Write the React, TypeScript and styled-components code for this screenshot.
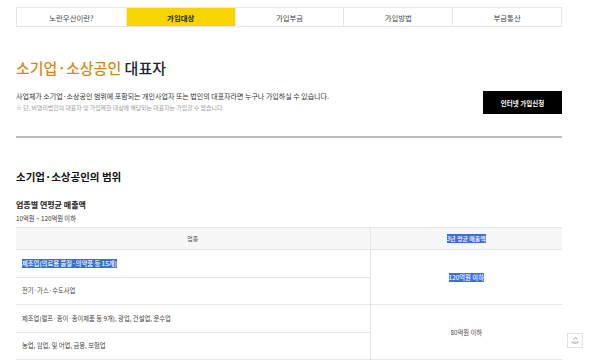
import React from "react";
import styled, { createGlobalStyle } from "styled-components";

const Global = createGlobalStyle`
  html, body { margin: 0; padding: 0; background: #fff; }
  body {
    font-family: "Noto Sans CJK KR", "Noto Sans", sans-serif;
    color: #222;
    overflow: hidden;
  }
  * { box-sizing: border-box; }
`;

const Page = styled.div`
  width: 600px;
  height: 360px;
  padding: 7px 38px 0 16px;
  display: flex;
  flex-direction: column;
`;

const Tabs = styled.nav`
  display: grid;
  grid-template-columns: repeat(5, 1fr);
  height: 23px;
  border: 1px solid #e6e6e6;
`;

const Tab = styled.div<{ $active?: boolean }>`
  display: flex;
  align-items: center;
  justify-content: center;
  font-size: 7.4px;
  font-weight: ${(p) => (p.$active ? 700 : 400)};
  color: ${(p) => (p.$active ? "#222" : "#444")};
  background: ${(p) => (p.$active ? "#f8d500" : "#fff")};
  border-left: 1px solid #e6e6e6;
  &:first-child { border-left: none; }
`;

const Title = styled.h1`
  margin: 31px 0 0;
  font-size: 15px;
  line-height: 20px;
  font-weight: 500;
  color: #1f2430;
`;

const Accent = styled.span`
  color: #d68a1c;
`;

const IntroRow = styled.div`
  margin-top: 13px;
  display: flex;
  align-items: center;
  justify-content: space-between;
`;

const IntroText = styled.div`
  display: flex;
  flex-direction: column;
  gap: 3px;
  margin-top: -2px;
`;

const Lead = styled.p`
  margin: 0;
  font-size: 7px;
  line-height: 9px;
  color: #333;
`;

const Note = styled.p`
  margin: 0;
  font-size: 5.9px;
  line-height: 8px;
  color: #9a9a9a;
`;

const ApplyButton = styled.button`
  width: 79px;
  height: 23px;
  border: none;
  background: #000;
  color: #fff;
  font-family: inherit;
  font-size: 6.5px;
  font-weight: 700;
  padding: 0;
`;

const Divider = styled.hr`
  margin: 22px 0 0;
  border: none;
  height: 2px;
  background: #bdbdbd;
`;

const SectionTitle = styled.h2`
  margin: 31px 0 0;
  font-size: 10.5px;
  line-height: 16px;
  font-weight: 700;
  color: #111;
`;

const SubTitle = styled.h3`
  margin: 14px 0 0;
  font-size: 8px;
  line-height: 12px;
  font-weight: 700;
  color: #222;
`;

const Range = styled.p`
  margin: 3px 0 0;
  font-size: 6.3px;
  line-height: 10px;
  color: #333;
`;

const Table = styled.table`
  margin-top: 3px;
  width: 546px;
  border-collapse: collapse;
  table-layout: fixed;
  border-top: 1px solid #e6e6e6;
`;

const Th = styled.th<{ $w?: number }>`
  height: 22px;
  background: #f7f7f7;
  font-size: 6px;
  font-weight: 400;
  color: #555;
  text-align: center;
  border-bottom: 1px solid #e6e6e6;
  border-left: 1px solid #e6e6e6;
  &:first-child { border-left: none; }
  ${(p) => (p.$w ? `width: ${p.$w}px;` : "")}
`;

const Td = styled.td<{ $center?: boolean }>`
  height: 27.5px;
  font-size: 6.3px;
  color: #444;
  padding: 0 0 0 6px;
  text-align: ${(p) => (p.$center ? "center" : "left")};
  vertical-align: middle;
  border-bottom: 1px solid #e6e6e6;
  border-left: ${(p) => (p.$center ? "1px solid #e6e6e6" : "none")};
  ${(p) => (p.$center ? "padding: 0;" : "")}
`;

const Selected = styled.span`
  background: #3a6fd6;
  color: #fff;
  font-weight: 500;
`;

const TopButton = styled.button`
  position: fixed;
  left: 567px;
  top: 333px;
  width: 16px;
  height: 15px;
  padding: 0;
  border: 1px solid #e2e2e2;
  background: #fff;
  display: flex;
  flex-direction: column;
  align-items: center;
  justify-content: center;
  gap: 1px;
  font-family: "DejaVu Sans", sans-serif;
  font-size: 3.5px;
  color: #666;
`;

export default function App() {
  const tabs = ["노란우산이란?", "가입대상", "가입부금", "가입방법", "부금통산"];
  return (
    <>
      <Global />
      <Page>
        <Tabs>
          {tabs.map((t, i) => (
            <Tab key={t} $active={i === 1}>
              {t}
            </Tab>
          ))}
        </Tabs>
        <Title>
          <Accent>소기업·소상공인</Accent> 대표자
        </Title>
        <IntroRow>
          <IntroText>
            <Lead>
              사업체가 소기업·소상공인 범위에 포함되는 개인사업자 또는 법인의 대표자라면 누구나 가입하실 수 있습니다.
            </Lead>
            <Note>※ 단, 비영리법인의 대표자 및 가입제한 대상에 해당되는 대표자는 가입할 수 없습니다.</Note>
          </IntroText>
          <ApplyButton>인터넷 가입신청</ApplyButton>
        </IntroRow>
        <Divider />
        <SectionTitle>소기업·소상공인의 범위</SectionTitle>
        <SubTitle>업종별 연평균 매출액</SubTitle>
        <Range>10억원 ~ 120억원 이하</Range>
        <Table>
          <thead>
            <tr>
              <Th $w={354}>업종</Th>
              <Th>
                <Selected>3년 평균 매출액</Selected>
              </Th>
            </tr>
          </thead>
          <tbody>
            <tr>
              <Td>
                <Selected>제조업(의료용 물질·의약품 등 15개)</Selected>
              </Td>
              <Td $center rowSpan={2}>
                <Selected>120억원 이하</Selected>
              </Td>
            </tr>
            <tr>
              <Td>전기·가스·수도사업</Td>
            </tr>
            <tr>
              <Td>제조업(펄프·종이·종이제품 등 9개), 광업, 건설업, 운수업</Td>
              <Td $center rowSpan={2}>
                80억원 이하
              </Td>
            </tr>
            <tr>
              <Td>농업, 임업, 및 어업, 금융, 보험업</Td>
            </tr>
          </tbody>
        </Table>
      </Page>
      <TopButton aria-label="TOP">
        <svg width="5" height="3" viewBox="0 0 5 3">
          <path d="M0.5 2.5 L2.5 0.5 L4.5 2.5" fill="none" stroke="#777" strokeWidth="0.7" />
        </svg>
        TOP
      </TopButton>
    </>
  );
}
